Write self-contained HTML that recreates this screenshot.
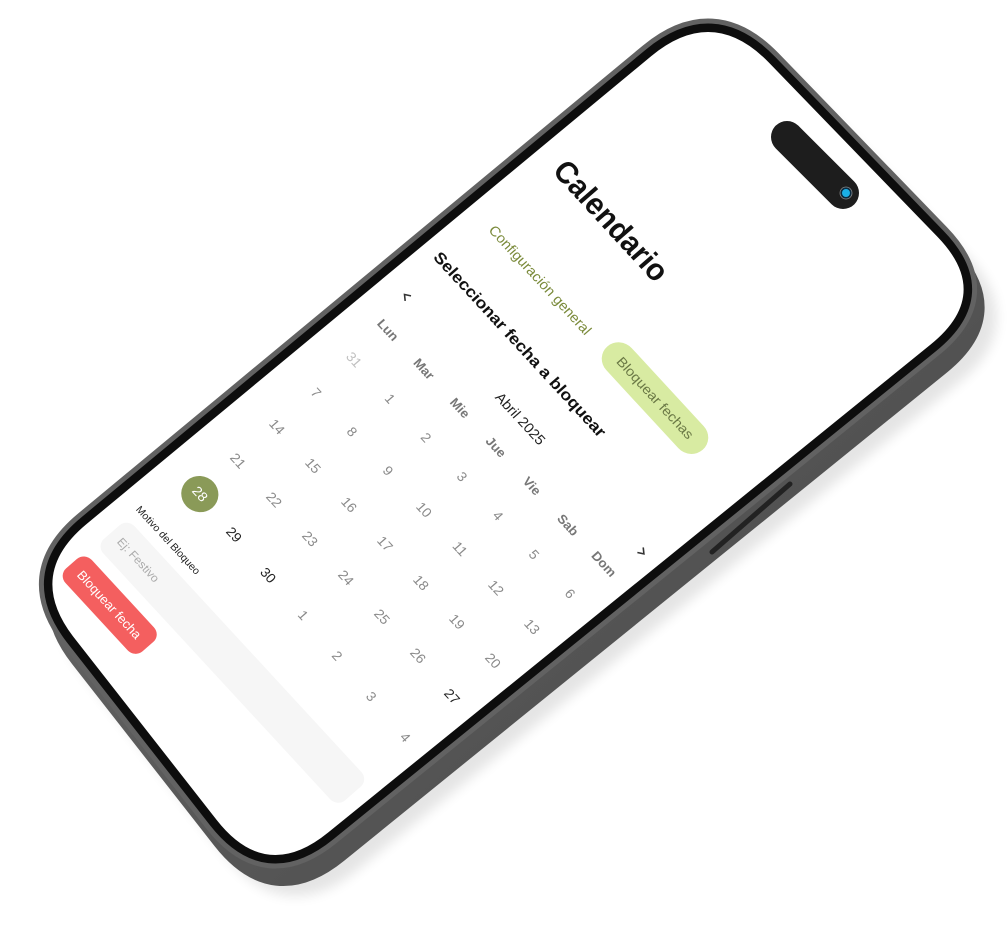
<!DOCTYPE html>
<html><head><meta charset="utf-8"><style>
html,body{margin:0;padding:0;background:#fff;}
svg{display:block;}
text{font-family:"Liberation Sans",sans-serif;}
</style></head><body>
<svg width="1007" height="939" viewBox="0 0 1007 939" xmlns="http://www.w3.org/2000/svg">
<defs>
<linearGradient id="side" x1="0" y1="0" x2="1" y2="1">
<stop offset="0" stop-color="#707070"/><stop offset="1" stop-color="#444"/>
</linearGradient>
<filter id="sh" x="-10%" y="-10%" width="120%" height="120%"><feGaussianBlur stdDeviation="6"/></filter>
</defs>
<g transform="translate(20,28)" opacity="0.1" filter="url(#sh)">
<path d="M 86.6,524 L 651.4,56 Q 713,5 768.7,62.4 L 937.3,236.6 Q 993,294 930.8,344.4 L 328,832.6 Q 266,883 216.7,820 L 74.3,638 Q 25,575 86.6,524 Z" fill="#000" stroke="#000" stroke-width="26" stroke-linejoin="round"/>
</g>
<g transform="translate(8,18)">
<path d="M 86.6,524 L 651.4,56 Q 713,5 768.7,62.4 L 937.3,236.6 Q 993,294 930.8,344.4 L 328,832.6 Q 266,883 216.7,820 L 74.3,638 Q 25,575 86.6,524 Z" fill="url(#side)" stroke="url(#side)" stroke-width="26" stroke-linejoin="round"/>
</g>
<path d="M 86.6,524 L 651.4,56 Q 713,5 768.7,62.4 L 937.3,236.6 Q 993,294 930.8,344.4 L 328,832.6 Q 266,883 216.7,820 L 74.3,638 Q 25,575 86.6,524 Z" fill="#5c5c5c" stroke="#626262" stroke-width="27" stroke-linejoin="round"/>
<path d="M 86.6,524 L 651.4,56 Q 713,5 768.7,62.4 L 937.3,236.6 Q 993,294 930.8,344.4 L 328,832.6 Q 266,883 216.7,820 L 74.3,638 Q 25,575 86.6,524 Z" fill="#0d0d0d" stroke="#0d0d0d" stroke-width="17" stroke-linejoin="round"/>
<line x1="712" y1="552" x2="790" y2="484" stroke="#222" stroke-width="5" stroke-linecap="round"/>
<path d="M 86.6,524 L 651.4,56 Q 713,5 768.7,62.4 L 937.3,236.6 Q 993,294 930.8,344.4 L 328,832.6 Q 266,883 216.7,820 L 74.3,638 Q 25,575 86.6,524 Z" fill="#fff"/>
<line x1="787" y1="137" x2="843" y2="193" stroke="#1d1d1d" stroke-width="32" stroke-linecap="round"/>
<circle cx="846" cy="193" r="6" fill="#0a2a40" stroke="#888" stroke-width="0.8"/>
<circle cx="846" cy="193" r="4" fill="#1ab0e8"/>

<g transform="matrix(0.9,0.975,-0.975,0.85,388,330)">
<text x="-9" y="-184" font-size="24" font-weight="bold" fill="#111" dominant-baseline="central" textLength="115" lengthAdjust="spacingAndGlyphs">Calendario</text>
<text x="-7" y="-112" font-size="11" fill="#7a8a3a" dominant-baseline="central" textLength="108" lengthAdjust="spacingAndGlyphs">Configuración general</text>
<rect x="118" y="-129" width="106" height="26" rx="13" fill="#d8eba2"/>
<text x="171" y="-116" font-size="10.5" fill="#6a7845" text-anchor="middle" dominant-baseline="central" textLength="80" lengthAdjust="spacingAndGlyphs">Bloquear fechas</text>
<text x="-19" y="-67" font-size="12.5" font-weight="bold" fill="#111" dominant-baseline="central" textLength="185" lengthAdjust="spacingAndGlyphs">Seleccionar fecha a bloquear</text>
<text x="116" y="-28" font-size="11" fill="#222" text-anchor="middle" dominant-baseline="central">Abril 2025</text>
<path d="M -8,-31 L -12,-28 L -8,-25" fill="none" stroke="#333" stroke-width="1.2"/>
<path d="M 250,-31 L 254,-28 L 250,-25" fill="none" stroke="#333" stroke-width="1.2"/>
<g font-size="10" font-weight="bold" fill="#777" text-anchor="middle" dominant-baseline="central">
<text x="0" y="0">Lun</text><text x="40" y="0">Mar</text><text x="80" y="0">Mie</text><text x="120" y="0">Jue</text><text x="160" y="0">Vie</text><text x="200" y="0">Sab</text><text x="240" y="0">Dom</text>
</g>
<g font-size="10.5" fill="#8a8a8a" text-anchor="middle" dominant-baseline="central">
<text x="0" y="35" fill="#c0c0c0">31</text><text x="40" y="35">1</text><text x="80" y="35">2</text><text x="120" y="35">3</text><text x="160" y="35">4</text><text x="200" y="35">5</text><text x="240" y="35">6</text>
<text x="0" y="74">7</text><text x="40" y="74">8</text><text x="80" y="74">9</text><text x="120" y="74">10</text><text x="160" y="74">11</text><text x="200" y="74">12</text><text x="240" y="74">13</text>
<text x="0" y="114">14</text><text x="40" y="114">15</text><text x="80" y="114">16</text><text x="120" y="114">17</text><text x="160" y="114">18</text><text x="200" y="114">19</text><text x="240" y="114">20</text>
<text x="0" y="154">21</text><text x="40" y="154">22</text><text x="80" y="154">23</text><text x="120" y="154">24</text><text x="160" y="154">25</text><text x="200" y="154">26</text><text x="240" y="156" fill="#222">27</text>
<circle cx="0" cy="193" r="14" fill="#8a9a58"/>
<text x="0" y="193" fill="#fff">28</text><text x="40" y="195" fill="#222">29</text><text x="80" y="197" fill="#222">30</text><text x="120" y="198">1</text><text x="160" y="200">2</text><text x="200" y="202">3</text><text x="240" y="204">4</text>
</g>
<text x="-23" y="236" font-size="8" fill="#222" dominant-baseline="central" textLength="67" lengthAdjust="spacingAndGlyphs">Motivo del Bloqueo</text>
<rect x="-22" y="247" width="268" height="32" rx="8" fill="#f6f6f6"/>
<text x="-14" y="263" font-size="9" fill="#aaa" dominant-baseline="central">Ej: Festivo</text>
<rect x="-24" y="289" width="85" height="27" rx="8" fill="#f45f5f"/>
<text x="18" y="302.5" font-size="10" fill="#fff" text-anchor="middle" dominant-baseline="central" textLength="66" lengthAdjust="spacingAndGlyphs">Bloquear fecha</text>
</g>
</svg>
</body></html>
